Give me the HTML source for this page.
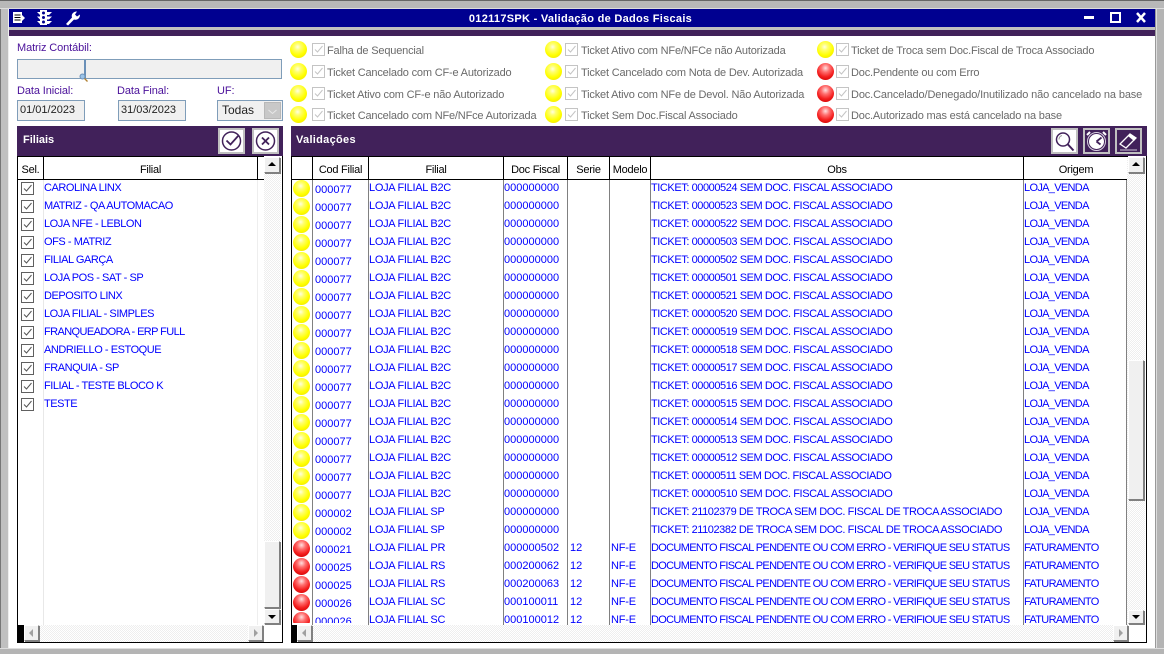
<!DOCTYPE html>
<html><head><meta charset="utf-8"><style>
html,body{margin:0;padding:0;width:1164px;height:654px;overflow:hidden;background:#c0c0c0}
*{box-sizing:border-box}
body{position:relative;font:11px/14px "Liberation Sans",sans-serif}
.a,.a2{position:absolute}
.t{position:absolute;white-space:nowrap}
.lb{color:#4a109a;font-size:11px;letter-spacing:-.1px}
.lg{color:#6a6a6a;letter-spacing:-.18px}
.b{position:absolute;width:17px;height:17px;border-radius:50%}
.y{background:radial-gradient(circle at 45% 35%,#ffffe0 0,#ffff70 22%,#ffff00 58%,#f0e400 88%,#c8b800 100%)}
.rd{background:radial-gradient(circle at 50% 30%,#ffe0e0 0,#ff7070 28%,#f42020 60%,#d00000 90%,#a80000 100%)}
.cb{position:absolute;width:13px;height:13px;border:1px solid #c4c4c4;background:#fff}
.cb svg{position:absolute;left:0;top:0}
.inp{position:absolute;background:#f0f0f0;border:1px solid #7f9db9;color:#222}
.hd{position:absolute;background:#41215a;height:30px;top:126px;color:#fff;font-weight:bold;line-height:29px;padding-left:6px}
.btn{position:absolute;top:128px;width:27px;height:26px;border:2px solid #c0c0c0;background:#fff}
.btn svg{position:absolute;left:0;top:0}
.th{position:absolute;top:156px;height:24px;border-top:1px solid #000;border-bottom:1px solid #000;border-right:1px solid #000;text-align:center;line-height:27px;color:#000;background:#fff;letter-spacing:-.25px}
.sb{position:absolute;background:#f0f0f0;border:1px solid;border-color:#fff #808080 #808080 #fff;box-shadow:1px 1px 0 #808080}
.dz{position:absolute;background:repeating-conic-gradient(#eee 0 25%,#fff 0 50%) 0 0/2px 2px}
.ar{position:absolute;width:0;height:0;border-style:solid;border-color:transparent}
.rows{position:absolute;overflow:hidden;color:#0000ff}
.r{position:relative;height:18px;white-space:nowrap}
.r span{position:absolute;top:3px;line-height:14px}
.r .b{top:2px;left:2px}
.c{top:5px!important;left:24px}
.f{left:78px;letter-spacing:-.3px}.d{left:213px}.s{left:279px}.m{left:320px;letter-spacing:-.2px}.o{left:360px;letter-spacing:-.43px}.g{left:733px;letter-spacing:-.68px}
.e{letter-spacing:-.67px}
.vl{position:absolute;width:1px}
.fr{position:relative;height:18px;color:#0000ff;white-space:nowrap}
.fr span{position:absolute;left:27px;top:3px;letter-spacing:-.45px}
.fr .cb{left:4px;top:4px;border-color:#606060}
</style></head><body>
<!-- outer frame -->
<div class="a" style="left:0;top:0;width:1164px;height:1px;background:#555"></div>
<div class="a" style="left:0;top:0;width:1px;height:654px;background:#777"></div>
<div class="a" style="left:0;top:0;width:1164px;height:9px;background:#b8b8b8;border-top:1px solid #666;border-bottom:1px solid #ddd"></div>
<div class="a" style="left:8px;top:9px;width:1148px;height:639px;background:#fff;border-left:1px solid #eee;border-right:1px solid #999"></div>
<div class="a" style="left:9px;top:9px;width:1146px;height:18px;background:#000090"></div>
<div class="a" style="left:9px;top:27px;width:1146px;height:3px;background:#c0c0c0"></div>
<div class="a" style="left:9px;top:30px;width:1146px;height:6px;background:#41215a"></div>
<div class="a" style="left:0;top:648px;width:1164px;height:6px;background:#b4b4b4;border-top:1px solid #ddd"></div>
<div class="a" style="left:1156px;top:9px;width:8px;height:639px;background:#b4b4b4;border-left:1px solid #ddd"></div>

<!-- title icons -->
<svg class="a" style="left:9px;top:9px" width="80" height="18">
<rect x="4" y="3" width="9" height="11" fill="#fff"/><path d="M5.500 6h6M5.500 8.500h6M5.500 11h6" stroke="#000" stroke-width="1"/><path d="M13 6l3 3-3 3z" fill="#fff"/>
<rect x="31" y="1" width="7" height="15" fill="#fff"/><path d="M28 3h15l-3 3h-9zM28 7.500h15l-3 3h-9zM28 12h15l-3 3h-9z" fill="#fff"/><circle cx="34.500" cy="4" r="1.500" fill="#000090"/><circle cx="34.500" cy="8.500" r="1.500" fill="#000090"/><circle cx="34.500" cy="13" r="1.500" fill="#000090"/>
<path d="M57 15l6-6.500c-1-3 1-6 5-6l-2 3 2 2 3-2c0 4-3 6-6 5l-6 6z" fill="#fff"/>
</svg>
<div class="t" style="left:400px;width:361px;top:12px;text-align:center;color:#fff;font-weight:bold;letter-spacing:.29px">012117SPK - Validação de Dados Fiscais</div>
<svg class="a" style="left:1080px;top:9px" width="72" height="18">
<rect x="4" y="7" width="10" height="3" fill="#fff"/>
<rect x="31" y="4" width="9" height="9" fill="none" stroke="#fff" stroke-width="2"/>
<path d="M57 4l8 9M65 4l-8 9" stroke="#fff" stroke-width="2.500"/>
</svg>

<!-- left form -->
<div class="t lb" style="left:17px;top:41px">Matriz Contábil:</div>
<div class="inp" style="left:17px;top:59px;width:265px;height:20px"></div>
<div class="a" style="left:84px;top:60px;width:2px;height:19px;background:#6a90b8"></div>
<svg class="a" style="left:79px;top:73px" width="9" height="9"><circle cx="3.500" cy="3.500" r="2.500" fill="#9cc4e8" stroke="#6a90b8"/><path d="M5.500 5.500l3 3" stroke="#b08030" stroke-width="1.300"/></svg>
<div class="t lb" style="left:17px;top:84px">Data Inicial:</div>
<div class="t lb" style="left:117px;top:84px">Data Final:</div>
<div class="t lb" style="left:217px;top:84px">UF:</div>
<div class="inp" style="left:17px;top:100px;width:68px;height:21px;padding-left:2px;line-height:18px">01/01/2023</div>
<div class="inp" style="left:118px;top:100px;width:68px;height:21px;padding-left:2px;line-height:18px">31/03/2023</div>
<div class="inp" style="left:217px;top:100px;width:66px;height:21px;padding-left:4px;line-height:19px;font-size:12px">Todas</div>
<div class="a" style="left:264px;top:102px;width:17px;height:17px;background:#c8c8c8;border:1px solid #b8b8b8"></div>
<svg class="a" style="left:264px;top:102px" width="17" height="17"><path d="M4.500 8l4 3.500 4-3.500" fill="none" stroke="#e8e8e8" stroke-width="1"/></svg>

<!-- legend -->
<div class="b y" style="left:290px;top:41px"></div><div class="cb" style="left:312px;top:43px"><svg width="11" height="11"><path d="M2 5.500l2.500 2.500 5-6" fill="none" stroke="#c4c4c4"/></svg></div><div class="t lg" style="left:327px;top:44px">Falha de Sequencial</div>
<div class="b y" style="left:290px;top:63px"></div><div class="cb" style="left:312px;top:65px"><svg width="11" height="11"><path d="M2 5.500l2.500 2.500 5-6" fill="none" stroke="#c4c4c4"/></svg></div><div class="t lg" style="left:327px;top:66px">Ticket Cancelado com CF-e Autorizado</div>
<div class="b y" style="left:290px;top:85px"></div><div class="cb" style="left:312px;top:87px"><svg width="11" height="11"><path d="M2 5.500l2.500 2.500 5-6" fill="none" stroke="#c4c4c4"/></svg></div><div class="t lg" style="left:327px;top:88px">Ticket Ativo com CF-e não Autorizado</div>
<div class="b y" style="left:290px;top:106px"></div><div class="cb" style="left:312px;top:108px"><svg width="11" height="11"><path d="M2 5.500l2.500 2.500 5-6" fill="none" stroke="#c4c4c4"/></svg></div><div class="t lg" style="left:327px;top:109px">Ticket Cancelado com NFe/NFce Autorizada</div>

<div class="b y" style="left:545px;top:41px"></div><div class="cb" style="left:565px;top:43px"><svg width="11" height="11"><path d="M2 5.500l2.500 2.500 5-6" fill="none" stroke="#c4c4c4"/></svg></div><div class="t lg" style="left:581px;top:44px">Ticket Ativo com NFe/NFCe não Autorizada</div>
<div class="b y" style="left:545px;top:63px"></div><div class="cb" style="left:565px;top:65px"><svg width="11" height="11"><path d="M2 5.500l2.500 2.500 5-6" fill="none" stroke="#c4c4c4"/></svg></div><div class="t lg" style="left:581px;top:66px">Ticket Cancelado com Nota de Dev. Autorizada</div>
<div class="b y" style="left:545px;top:85px"></div><div class="cb" style="left:565px;top:87px"><svg width="11" height="11"><path d="M2 5.500l2.500 2.500 5-6" fill="none" stroke="#c4c4c4"/></svg></div><div class="t lg" style="left:581px;top:88px">Ticket Ativo com NFe de Devol. Não Autorizada</div>
<div class="b y" style="left:545px;top:106px"></div><div class="cb" style="left:565px;top:108px"><svg width="11" height="11"><path d="M2 5.500l2.500 2.500 5-6" fill="none" stroke="#c4c4c4"/></svg></div><div class="t lg" style="left:581px;top:109px">Ticket Sem Doc.Fiscal Associado</div>

<div class="b y" style="left:817px;top:41px"></div><div class="cb" style="left:836px;top:43px"><svg width="11" height="11"><path d="M2 5.500l2.500 2.500 5-6" fill="none" stroke="#c4c4c4"/></svg></div><div class="t lg" style="left:851px;top:44px">Ticket de Troca sem Doc.Fiscal de Troca Associado</div>
<div class="b rd" style="left:817px;top:63px"></div><div class="cb" style="left:836px;top:65px"><svg width="11" height="11"><path d="M2 5.500l2.500 2.500 5-6" fill="none" stroke="#c4c4c4"/></svg></div><div class="t lg" style="left:851px;top:66px">Doc.Pendente ou com Erro</div>
<div class="b rd" style="left:817px;top:85px"></div><div class="cb" style="left:836px;top:87px"><svg width="11" height="11"><path d="M2 5.500l2.500 2.500 5-6" fill="none" stroke="#c4c4c4"/></svg></div><div class="t lg" style="left:851px;top:88px;letter-spacing:-.13px">Doc.Cancelado/Denegado/Inutilizado não cancelado na base</div>
<div class="b rd" style="left:817px;top:106px"></div><div class="cb" style="left:836px;top:108px"><svg width="11" height="11"><path d="M2 5.500l2.500 2.500 5-6" fill="none" stroke="#c4c4c4"/></svg></div><div class="t lg" style="left:851px;top:109px">Doc.Autorizado mas está cancelado na base</div>

<!-- Filiais panel -->
<div class="a" style="left:17px;top:156px;width:266px;height:487px;border:1px solid #000;border-top:0;background:#fff"></div>
<div class="hd" style="left:17px;width:266px">Filiais</div>
<div class="btn" style="left:218px"><svg width="23" height="22"><circle cx="11.500" cy="11" r="9" fill="none" stroke="#41215a" stroke-width="1.500"/><path d="M6.500 10.500l4 4 8-9" fill="none" stroke="#41215a" stroke-width="1.800"/></svg></div>
<div class="btn" style="left:252px"><svg width="23" height="22"><circle cx="11.500" cy="11" r="9" fill="none" stroke="#41215a" stroke-width="1.500"/><path d="M8 7.500l7 7M15 7.500l-7 7" stroke="#41215a" stroke-width="1.800"/></svg></div>
<div class="th" style="left:17px;width:27px;border-left:1px solid #000">Sel.</div>
<div class="th" style="left:44px;width:214px">Filial</div>
<div class="th" style="left:258px;width:6px;border-right:0"></div>
<div class="vl" style="left:43px;top:180px;height:445px;background:#e8e8e8"></div>
<div class="vl" style="left:257px;top:180px;height:445px;background:#eee"></div>
<div class="rows" style="left:17px;top:178px;width:247px;height:447px">
<div class="fr"><i class="cb"><svg width="11" height="11"><path d="M2 5.500l2.500 2.500 5-6" fill="none" stroke="#555"/></svg></i><span>CAROLINA LINX</span></div>
<div class="fr"><i class="cb"><svg width="11" height="11"><path d="M2 5.500l2.500 2.500 5-6" fill="none" stroke="#555"/></svg></i><span>MATRIZ - QA AUTOMACAO</span></div>
<div class="fr"><i class="cb"><svg width="11" height="11"><path d="M2 5.500l2.500 2.500 5-6" fill="none" stroke="#555"/></svg></i><span>LOJA NFE - LEBLON</span></div>
<div class="fr"><i class="cb"><svg width="11" height="11"><path d="M2 5.500l2.500 2.500 5-6" fill="none" stroke="#555"/></svg></i><span>OFS - MATRIZ</span></div>
<div class="fr"><i class="cb"><svg width="11" height="11"><path d="M2 5.500l2.500 2.500 5-6" fill="none" stroke="#555"/></svg></i><span>FILIAL GARÇA</span></div>
<div class="fr"><i class="cb"><svg width="11" height="11"><path d="M2 5.500l2.500 2.500 5-6" fill="none" stroke="#555"/></svg></i><span>LOJA POS - SAT - SP</span></div>
<div class="fr"><i class="cb"><svg width="11" height="11"><path d="M2 5.500l2.500 2.500 5-6" fill="none" stroke="#555"/></svg></i><span>DEPOSITO LINX</span></div>
<div class="fr"><i class="cb"><svg width="11" height="11"><path d="M2 5.500l2.500 2.500 5-6" fill="none" stroke="#555"/></svg></i><span>LOJA FILIAL - SIMPLES</span></div>
<div class="fr"><i class="cb"><svg width="11" height="11"><path d="M2 5.500l2.500 2.500 5-6" fill="none" stroke="#555"/></svg></i><span style="letter-spacing:-.6px">FRANQUEADORA - ERP FULL</span></div>
<div class="fr"><i class="cb"><svg width="11" height="11"><path d="M2 5.500l2.500 2.500 5-6" fill="none" stroke="#555"/></svg></i><span>ANDRIELLO - ESTOQUE</span></div>
<div class="fr"><i class="cb"><svg width="11" height="11"><path d="M2 5.500l2.500 2.500 5-6" fill="none" stroke="#555"/></svg></i><span>FRANQUIA - SP</span></div>
<div class="fr"><i class="cb"><svg width="11" height="11"><path d="M2 5.500l2.500 2.500 5-6" fill="none" stroke="#555"/></svg></i><span>FILIAL - TESTE BLOCO K</span></div>
<div class="fr"><i class="cb"><svg width="11" height="11"><path d="M2 5.500l2.500 2.500 5-6" fill="none" stroke="#555"/></svg></i><span>TESTE</span></div>
</div>
<div class="dz" style="left:264px;top:157px;width:17px;height:468px"></div>
<div class="sb" style="left:264px;top:157px;width:16px;height:16px"></div>
<div class="ar" style="left:268px;top:162px;border-width:0 4px 4px;border-bottom-color:#000"></div>
<div class="sb" style="left:264px;top:541px;width:16px;height:67px"></div>
<div class="sb" style="left:264px;top:609px;width:16px;height:15px"></div>
<div class="ar" style="left:268px;top:615px;border-width:4px 4px 0;border-top-color:#000"></div>
<div class="a" style="left:18px;top:625px;width:6px;height:17px;background:#000"></div>
<div class="dz" style="left:24px;top:625px;width:240px;height:17px"></div>
<div class="sb" style="left:24px;top:625px;width:15px;height:16px"></div>
<div class="ar" style="left:29px;top:629px;border-width:4px 4px 4px 0;border-right-color:#a0a0a0"></div>
<div class="sb" style="left:248px;top:625px;width:15px;height:16px"></div>
<div class="ar" style="left:254px;top:629px;border-width:4px 0 4px 4px;border-left-color:#a0a0a0"></div>

<!-- Validacoes panel -->
<div class="a" style="left:291px;top:156px;width:856px;height:487px;border:1px solid #000;border-top:0;background:#fff"></div>
<div class="hd" style="left:291px;width:856px;padding-left:5px;letter-spacing:.3px">Validações</div>
<div class="btn" style="left:1051px"><svg width="23" height="22"><circle cx="10" cy="9.500" r="6.500" fill="none" stroke="#41215a" stroke-width="1.500"/><path d="M6 9.500a4 4 0 0 1 3-4" fill="none" stroke="#999"/><path d="M14.500 14l6 6.500" stroke="#41215a" stroke-width="2"/></svg></div>
<div class="btn" style="left:1083px;background:#41215a"><svg width="23" height="22"><circle cx="11.500" cy="11.500" r="9" fill="#fff" stroke="#d8d0e0" stroke-width="1"/><circle cx="11.500" cy="11.500" r="8" fill="none" stroke="#41215a" stroke-width="1"/><path d="M11.500 11.500l5-4M11.500 11.500l4 3" stroke="#41215a" stroke-width="1.800"/><path d="M2 5l3-3M21 5l-3-3" stroke="#fff" stroke-width="2"/></svg></div>
<div class="btn" style="left:1115px;background:#41215a"><svg width="23" height="22"><path d="M3 14l10-10 6 4-10 10z" fill="none" stroke="#fff" stroke-width="1.300"/><path d="M11 6l6 5 2.500-3-6-4z" fill="#fff"/><path d="M3 20h17" stroke="#d0c8d8"/></svg></div>
<div class="th" style="left:291px;width:22px;border-left:1px solid #000"></div>
<div class="th" style="left:313px;width:56px">Cod Filial</div>
<div class="th" style="left:369px;width:135px">Filial</div>
<div class="th" style="left:504px;width:64px">Doc Fiscal</div>
<div class="th" style="left:568px;width:42px">Serie</div>
<div class="th" style="left:610px;width:41px">Modelo</div>
<div class="th" style="left:651px;width:373px">Obs</div>
<div class="th" style="left:1024px;width:104px;border-right:0">Origem</div>
<div class="vl" style="left:312px;top:180px;height:445px;background:#808080"></div>
<div class="vl" style="left:368px;top:180px;height:445px;background:#808080"></div>
<div class="vl" style="left:503px;top:180px;height:445px;background:#808080"></div>
<div class="vl" style="left:567px;top:180px;height:445px;background:#808080"></div>
<div class="vl" style="left:609px;top:180px;height:445px;background:#808080"></div>
<div class="vl" style="left:650px;top:180px;height:445px;background:#808080"></div>
<div class="vl" style="left:1023px;top:180px;height:445px;background:#808080"></div>
<div class="vl" style="left:1126px;top:180px;height:445px;background:#808080"></div>
<div class="rows" style="left:291px;top:180px;width:836px;height:445px;margin-top:-2px">
<div class="r"><i class="b y"></i><span class="c">000077</span><span class="f">LOJA FILIAL B2C</span><span class="d">000000000</span><span class="o">TICKET: 00000524 SEM DOC. FISCAL ASSOCIADO</span><span class="g">LOJA_VENDA</span></div>
<div class="r"><i class="b y"></i><span class="c">000077</span><span class="f">LOJA FILIAL B2C</span><span class="d">000000000</span><span class="o">TICKET: 00000523 SEM DOC. FISCAL ASSOCIADO</span><span class="g">LOJA_VENDA</span></div>
<div class="r"><i class="b y"></i><span class="c">000077</span><span class="f">LOJA FILIAL B2C</span><span class="d">000000000</span><span class="o">TICKET: 00000522 SEM DOC. FISCAL ASSOCIADO</span><span class="g">LOJA_VENDA</span></div>
<div class="r"><i class="b y"></i><span class="c">000077</span><span class="f">LOJA FILIAL B2C</span><span class="d">000000000</span><span class="o">TICKET: 00000503 SEM DOC. FISCAL ASSOCIADO</span><span class="g">LOJA_VENDA</span></div>
<div class="r"><i class="b y"></i><span class="c">000077</span><span class="f">LOJA FILIAL B2C</span><span class="d">000000000</span><span class="o">TICKET: 00000502 SEM DOC. FISCAL ASSOCIADO</span><span class="g">LOJA_VENDA</span></div>
<div class="r"><i class="b y"></i><span class="c">000077</span><span class="f">LOJA FILIAL B2C</span><span class="d">000000000</span><span class="o">TICKET: 00000501 SEM DOC. FISCAL ASSOCIADO</span><span class="g">LOJA_VENDA</span></div>
<div class="r"><i class="b y"></i><span class="c">000077</span><span class="f">LOJA FILIAL B2C</span><span class="d">000000000</span><span class="o">TICKET: 00000521 SEM DOC. FISCAL ASSOCIADO</span><span class="g">LOJA_VENDA</span></div>
<div class="r"><i class="b y"></i><span class="c">000077</span><span class="f">LOJA FILIAL B2C</span><span class="d">000000000</span><span class="o">TICKET: 00000520 SEM DOC. FISCAL ASSOCIADO</span><span class="g">LOJA_VENDA</span></div>
<div class="r"><i class="b y"></i><span class="c">000077</span><span class="f">LOJA FILIAL B2C</span><span class="d">000000000</span><span class="o">TICKET: 00000519 SEM DOC. FISCAL ASSOCIADO</span><span class="g">LOJA_VENDA</span></div>
<div class="r"><i class="b y"></i><span class="c">000077</span><span class="f">LOJA FILIAL B2C</span><span class="d">000000000</span><span class="o">TICKET: 00000518 SEM DOC. FISCAL ASSOCIADO</span><span class="g">LOJA_VENDA</span></div>
<div class="r"><i class="b y"></i><span class="c">000077</span><span class="f">LOJA FILIAL B2C</span><span class="d">000000000</span><span class="o">TICKET: 00000517 SEM DOC. FISCAL ASSOCIADO</span><span class="g">LOJA_VENDA</span></div>
<div class="r"><i class="b y"></i><span class="c">000077</span><span class="f">LOJA FILIAL B2C</span><span class="d">000000000</span><span class="o">TICKET: 00000516 SEM DOC. FISCAL ASSOCIADO</span><span class="g">LOJA_VENDA</span></div>
<div class="r"><i class="b y"></i><span class="c">000077</span><span class="f">LOJA FILIAL B2C</span><span class="d">000000000</span><span class="o">TICKET: 00000515 SEM DOC. FISCAL ASSOCIADO</span><span class="g">LOJA_VENDA</span></div>
<div class="r"><i class="b y"></i><span class="c">000077</span><span class="f">LOJA FILIAL B2C</span><span class="d">000000000</span><span class="o">TICKET: 00000514 SEM DOC. FISCAL ASSOCIADO</span><span class="g">LOJA_VENDA</span></div>
<div class="r"><i class="b y"></i><span class="c">000077</span><span class="f">LOJA FILIAL B2C</span><span class="d">000000000</span><span class="o">TICKET: 00000513 SEM DOC. FISCAL ASSOCIADO</span><span class="g">LOJA_VENDA</span></div>
<div class="r"><i class="b y"></i><span class="c">000077</span><span class="f">LOJA FILIAL B2C</span><span class="d">000000000</span><span class="o">TICKET: 00000512 SEM DOC. FISCAL ASSOCIADO</span><span class="g">LOJA_VENDA</span></div>
<div class="r"><i class="b y"></i><span class="c">000077</span><span class="f">LOJA FILIAL B2C</span><span class="d">000000000</span><span class="o">TICKET: 00000511 SEM DOC. FISCAL ASSOCIADO</span><span class="g">LOJA_VENDA</span></div>
<div class="r"><i class="b y"></i><span class="c">000077</span><span class="f">LOJA FILIAL B2C</span><span class="d">000000000</span><span class="o">TICKET: 00000510 SEM DOC. FISCAL ASSOCIADO</span><span class="g">LOJA_VENDA</span></div>
<div class="r"><i class="b y"></i><span class="c">000002</span><span class="f">LOJA FILIAL SP</span><span class="d">000000000</span><span class="o">TICKET: 21102379 DE TROCA SEM DOC. FISCAL DE TROCA ASSOCIADO</span><span class="g">LOJA_VENDA</span></div>
<div class="r"><i class="b y"></i><span class="c">000002</span><span class="f">LOJA FILIAL SP</span><span class="d">000000000</span><span class="o">TICKET: 21102382 DE TROCA SEM DOC. FISCAL DE TROCA ASSOCIADO</span><span class="g">LOJA_VENDA</span></div>
<div class="r"><i class="b rd"></i><span class="c">000021</span><span class="f">LOJA FILIAL PR</span><span class="d">000000502</span><span class="s">12</span><span class="m">NF-E</span><span class="o e">DOCUMENTO FISCAL PENDENTE OU COM ERRO - VERIFIQUE SEU STATUS</span><span class="g">FATURAMENTO</span></div>
<div class="r"><i class="b rd"></i><span class="c">000025</span><span class="f">LOJA FILIAL RS</span><span class="d">000200062</span><span class="s">12</span><span class="m">NF-E</span><span class="o e">DOCUMENTO FISCAL PENDENTE OU COM ERRO - VERIFIQUE SEU STATUS</span><span class="g">FATURAMENTO</span></div>
<div class="r"><i class="b rd"></i><span class="c">000025</span><span class="f">LOJA FILIAL RS</span><span class="d">000200063</span><span class="s">12</span><span class="m">NF-E</span><span class="o e">DOCUMENTO FISCAL PENDENTE OU COM ERRO - VERIFIQUE SEU STATUS</span><span class="g">FATURAMENTO</span></div>
<div class="r"><i class="b rd"></i><span class="c">000026</span><span class="f">LOJA FILIAL SC</span><span class="d">000100011</span><span class="s">12</span><span class="m">NF-E</span><span class="o e">DOCUMENTO FISCAL PENDENTE OU COM ERRO - VERIFIQUE SEU STATUS</span><span class="g">FATURAMENTO</span></div>
<div class="r"><i class="b rd"></i><span class="c">000026</span><span class="f">LOJA FILIAL SC</span><span class="d">000100012</span><span class="s">12</span><span class="m">NF-E</span><span class="o e">DOCUMENTO FISCAL PENDENTE OU COM ERRO - VERIFIQUE SEU STATUS</span><span class="g">FATURAMENTO</span></div>
</div>
<div class="dz" style="left:1127px;top:157px;width:18px;height:468px"></div>
<div class="sb" style="left:1128px;top:157px;width:16px;height:16px"></div>
<div class="ar" style="left:1132px;top:162px;border-width:0 4px 4px;border-bottom-color:#000"></div>
<div class="sb" style="left:1128px;top:360px;width:16px;height:140px"></div>
<div class="sb" style="left:1128px;top:610px;width:16px;height:14px"></div>
<div class="ar" style="left:1132px;top:615px;border-width:4px 4px 0;border-top-color:#000"></div>
<div class="a" style="left:292px;top:625px;width:5px;height:17px;background:#000"></div>
<div class="dz" style="left:297px;top:625px;width:831px;height:17px"></div>
<div class="sb" style="left:297px;top:625px;width:15px;height:16px"></div>
<div class="ar" style="left:302px;top:629px;border-width:4px 4px 4px 0;border-right-color:#a0a0a0"></div>
<div class="sb" style="left:1113px;top:625px;width:15px;height:16px"></div>
<div class="ar" style="left:1119px;top:629px;border-width:4px 0 4px 4px;border-left-color:#a0a0a0"></div>
</body></html>
